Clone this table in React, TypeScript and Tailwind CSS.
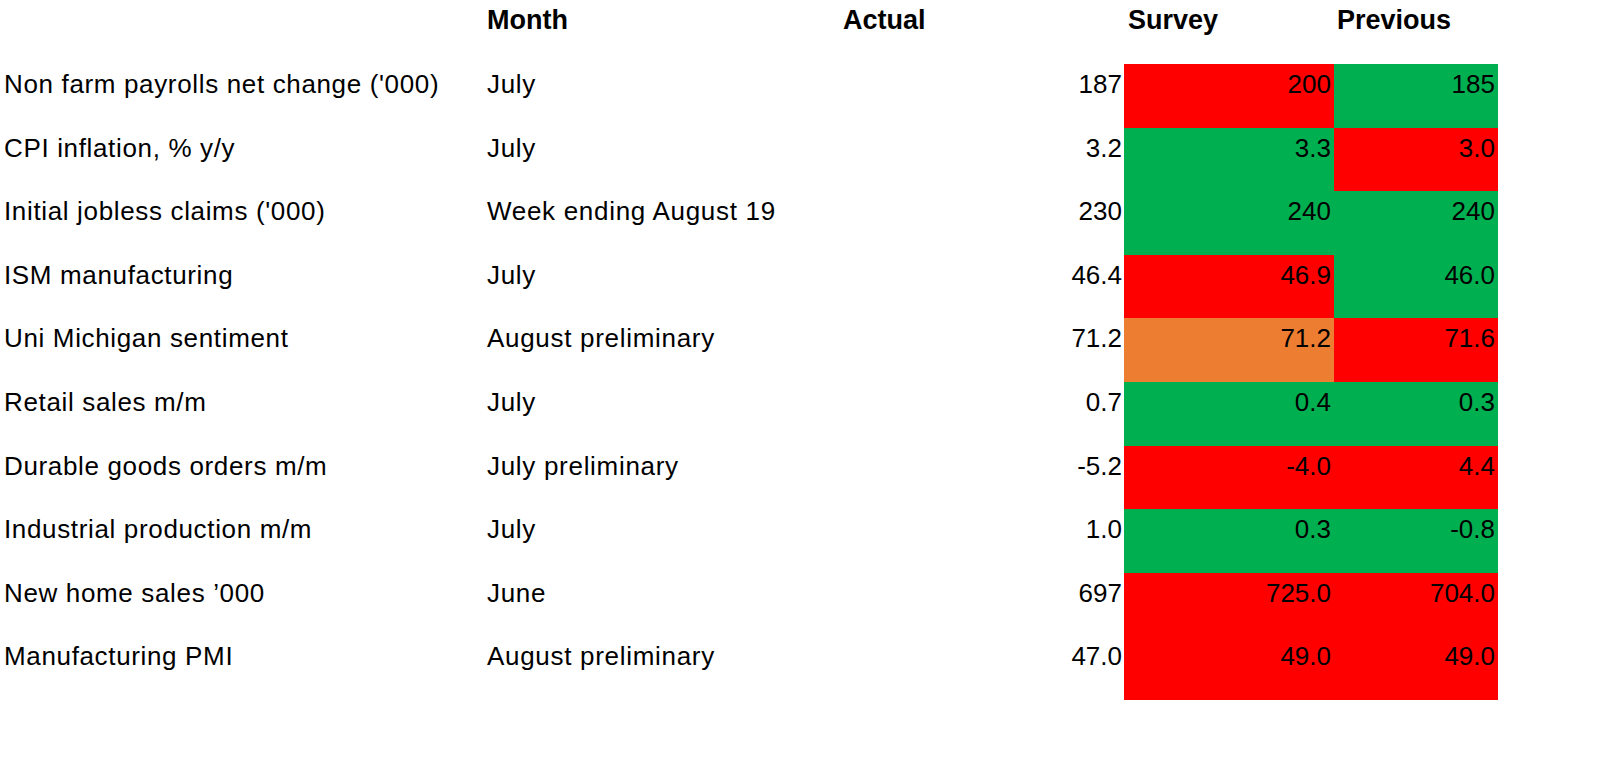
const RED = "bg-[#ff0000]"
const GREEN = "bg-[#00b050]"
const ORANGE = "bg-[#ed7d31]"

type Row = {
  label: string
  month: string
  actual: string
  survey: string
  previous: string
  surveyBg: string
  previousBg: string
}

const rows: Row[] = [
  { label: "Non farm payrolls net change ('000)", month: "July", actual: "187", survey: "200", previous: "185", surveyBg: RED, previousBg: GREEN },
  { label: "CPI inflation, % y/y", month: "July", actual: "3.2", survey: "3.3", previous: "3.0", surveyBg: GREEN, previousBg: RED },
  { label: "Initial jobless claims ('000)", month: "Week ending August 19", actual: "230", survey: "240", previous: "240", surveyBg: GREEN, previousBg: GREEN },
  { label: "ISM manufacturing", month: "July", actual: "46.4", survey: "46.9", previous: "46.0", surveyBg: RED, previousBg: GREEN },
  { label: "Uni Michigan sentiment", month: "August preliminary", actual: "71.2", survey: "71.2", previous: "71.6", surveyBg: ORANGE, previousBg: RED },
  { label: "Retail sales m/m", month: "July", actual: "0.7", survey: "0.4", previous: "0.3", surveyBg: GREEN, previousBg: GREEN },
  { label: "Durable goods orders m/m", month: "July preliminary", actual: "-5.2", survey: "-4.0", previous: "4.4", surveyBg: RED, previousBg: RED },
  { label: "Industrial production m/m", month: "July", actual: "1.0", survey: "0.3", previous: "-0.8", surveyBg: GREEN, previousBg: GREEN },
  { label: "New home sales \u2019000", month: "June", actual: "697", survey: "725.0", previous: "704.0", surveyBg: RED, previousBg: RED },
  { label: "Manufacturing PMI", month: "August preliminary", actual: "47.0", survey: "49.0", previous: "49.0", surveyBg: RED, previousBg: RED },
]

const cols = "grid grid-cols-[485px_354px_285px_210px_164px]"

export default function App() {
  return (
    <div className="h-[779px] w-[1600px] overflow-hidden bg-white font-['Liberation_Sans',Arial,sans-serif] text-black">
      {/* Header */}
      <div className={`${cols} h-[64px] pt-[5px] text-[27px] font-bold leading-[31px]`}>
        <div />
        <div className="pl-[2px]">Month</div>
        <div className="pl-[4px]">Actual</div>
        <div className="pl-[4px]">Survey</div>
        <div className="pl-[3px]">Previous</div>
      </div>

      {/* Rows */}
      {rows.map((r) => (
        <div
          key={r.label}
          className={`${cols} h-[63.6px] text-[26px] leading-[30px]`}
        >
          <div className="pl-[4px] pt-[5px] whitespace-nowrap tracking-[0.65px]">{r.label}</div>
          <div className="pl-[2px] pt-[5px] whitespace-nowrap tracking-[0.7px]">{r.month}</div>
          <div className="pr-[2px] pt-[5px] text-right">{r.actual}</div>
          <div className={`${r.surveyBg} pr-[3px] pt-[5px] text-right`}>{r.survey}</div>
          <div className={`${r.previousBg} pr-[3px] pt-[5px] text-right`}>{r.previous}</div>
        </div>
      ))}
    </div>
  )
}
